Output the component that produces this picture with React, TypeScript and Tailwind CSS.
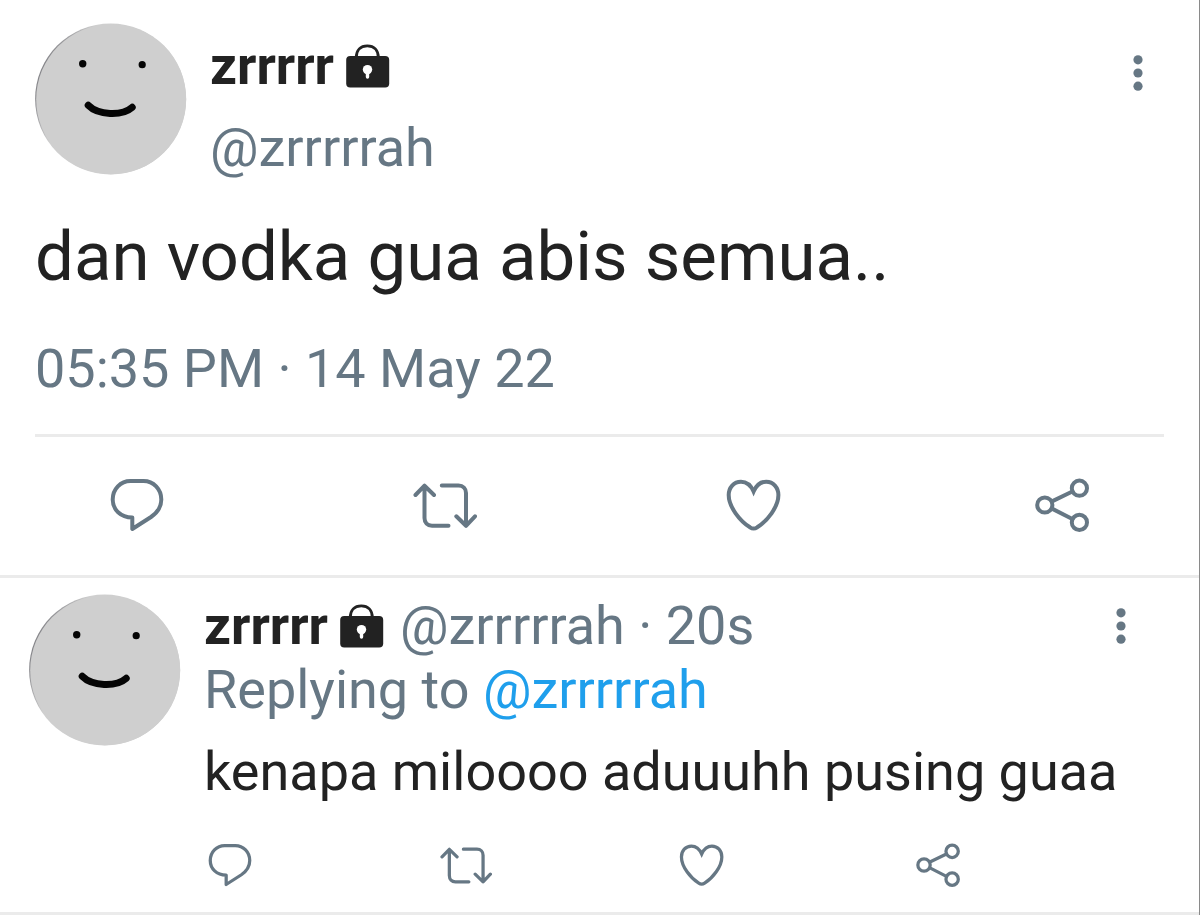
import type { ReactNode } from "react"

interface IconProps {
  className?: string
}

function Avatar() {
  return (
    <svg viewBox="0 0 152 152" className="h-[152px] w-[152px] shrink-0" role="img" aria-label="zrrrrr">
      <defs>
        <linearGradient id="rim" x1="0" y1="0.3" x2="1" y2="0.7">
          <stop offset="0" stopColor="#77777c" />
          <stop offset="0.25" stopColor="#cfcfcf" />
        </linearGradient>
      </defs>
      <circle cx="75.6" cy="76" r="75.5" fill="url(#rim)" />
      <circle cx="76.2" cy="76.3" r="75" fill="#cfcfcf" />
      <circle cx="47.7" cy="40.7" r="3.7" fill="#050505" />
      <circle cx="107.2" cy="41.7" r="3.6" fill="#050505" />
      <path d="M53.2 82.3C63 92.3 87 93.3 97.2 84.3" fill="none" stroke="#050505" strokeWidth="7" strokeLinecap="round" />
    </svg>
  )
}

function LockIcon() {
  return (
    <svg viewBox="0 0 44 44" className="h-11 w-11 shrink-0" role="img" aria-label="Protected account">
      <path d="M10.2 14C10.2 6 14.6 1.9 21.3 1.9S32.4 6 32.4 14" fill="none" stroke="#222" strokeWidth="2.8" />
      <rect x="0.2" y="12" width="43" height="31.4" rx="4" fill="#222" />
      <circle cx="21.5" cy="25.6" r="4.7" fill="#fff" />
      <path d="M19.8 27H23.2V33A1.7 1.7 0 0 1 19.8 33Z" fill="#fff" />
    </svg>
  )
}

function DotsIcon() {
  return (
    <svg viewBox="0 0 12 36" className="h-9 w-3" fill="#667784">
      <circle cx="6" cy="4.8" r="4.6" />
      <circle cx="6" cy="18" r="4.6" />
      <circle cx="6" cy="31.2" r="4.6" />
    </svg>
  )
}

function Stroked({ className, children }: IconProps & { children: ReactNode }) {
  return (
    <svg
      viewBox="0 0 64 64"
      className={className}
      fill="none"
      stroke="#667784"
      strokeWidth="4"
      strokeLinecap="round"
      strokeLinejoin="round"
    >
      {children}
    </svg>
  )
}

function ReplyIcon({ className }: IconProps) {
  return (
    <Stroked className={className}>
      <path d="M25.5 8H38.5C48.5 8 56.3 16 56.3 26.5C56.3 33.5 52.5 39.5 46 44L27.3 56V44.5C15.5 44.5 7.7 36.5 7.7 26.5C7.7 16 15.5 8 25.5 8Z" />
    </Stroked>
  )
}

function RetweetIcon({ className }: IconProps) {
  return (
    <Stroked className={className}>
      <path d="M2.5 22L11.5 12.7L21 22M11.5 13V45C11.5 49.5 14.5 52.7 19 52.7H35.5" />
      <path d="M28.8 12.5H45.5C50 12.5 53 15.5 53 20V52.5M43.3 43.3L53 52.8L62 43.3" />
    </Stroked>
  )
}

function LikeIcon({ className }: IconProps) {
  return (
    <Stroked className={className}>
      <path
        strokeLinejoin="miter"
        d="M31.6 18.5C29 12.5 24.5 8.7 19 8.7C11.8 8.7 6.7 14.5 6.7 22C6.7 34 18 48 28 54.3Q31.6 56.8 35.2 54.3C45.2 48 56.4 34 56.4 22C56.4 14.5 51.3 8.7 44.2 8.7C38.7 8.7 34.2 12.5 31.6 18.5Z"
      />
    </Stroked>
  )
}

function ShareIcon({ className }: IconProps) {
  return (
    <Stroked className={className}>
      <circle cx="14.8" cy="32" r="7.6" />
      <circle cx="49.4" cy="15.2" r="7.6" />
      <circle cx="49.4" cy="49.4" r="7.6" />
      <path d="M22 28.4L42.4 18.5M22 35.6L42.4 46" />
    </Stroked>
  )
}

const actions = [
  { label: "Reply", Icon: ReplyIcon },
  { label: "Retweet", Icon: RetweetIcon },
  { label: "Like", Icon: LikeIcon },
  { label: "Share", Icon: ShareIcon },
]

function MenuButton() {
  return (
    <button type="button" aria-label="More options" className="block shrink-0">
      <DotsIcon />
    </button>
  )
}

export default function App() {
  return (
    <main className="border-r border-[#8a8a8a] bg-white font-[Roboto,sans-serif] text-[54px] text-[#222]">
      <article className="border-b-[3px] border-[#ebebeb]">
        <div className="px-[35px] pt-[23px]">
          <header className="flex items-start gap-[23px]">
            <Avatar />
            <div className="min-w-0 flex-1">
              <div className="flex items-center gap-3 leading-[86px]">
                <span className="text-[53px] font-bold">zrrrrr</span>
                <LockIcon />
              </div>
              <a href="#profile" className="block leading-[78px] text-[#667784]">@zrrrrrah</a>
            </div>
            <div className="pt-8 pr-5">
              <MenuButton />
            </div>
          </header>
          <p className="mt-5 text-[69px] leading-[100px]">dan vodka gua abis semua..</p>
          <p className="mt-[30px] leading-[64px] text-[#667784]">05:35 PM · 14 May 22</p>
          <hr className="mt-[33px] border-t-[3px] border-[#ebebeb]" />
        </div>
        <div className="flex justify-between px-[105px] pt-9 pb-[38px]">
          {actions.map(({ label, Icon }) => (
            <button key={label} type="button" aria-label={label}>
              <Icon className="h-16 w-16" />
            </button>
          ))}
        </div>
      </article>

      <article className="flex items-start gap-[23px] border-b-[3px] border-[#ebebeb] pt-4 pr-[51px] pb-[21px] pl-[29px]">
        <Avatar />
        <div className="min-w-0 flex-1">
          <div className="flex items-center gap-3 leading-[64px]">
            <span className="text-[53px] font-bold">zrrrrr</span>
            <LockIcon />
            <span className="ml-1 flex-1 text-[#667784]">@zrrrrrah · 20s</span>
            <div className="pr-[21px]">
              <MenuButton />
            </div>
          </div>
          <p className="leading-[64px] text-[#667784]">
            Replying to <a href="#profile" className="text-[#1f9fec]">@zrrrrrah</a>
          </p>
          <p className="mt-[18px] leading-[64px]">kenapa miloooo aduuuhh pusing guaa</p>
          <div className="mt-[35px] grid grid-cols-4">
            {actions.map(({ label, Icon }) => (
              <button key={label} type="button" aria-label={label} className="justify-self-start">
                <Icon className="h-[52px] w-[52px]" />
              </button>
            ))}
          </div>
        </div>
      </article>
    </main>
  )
}
